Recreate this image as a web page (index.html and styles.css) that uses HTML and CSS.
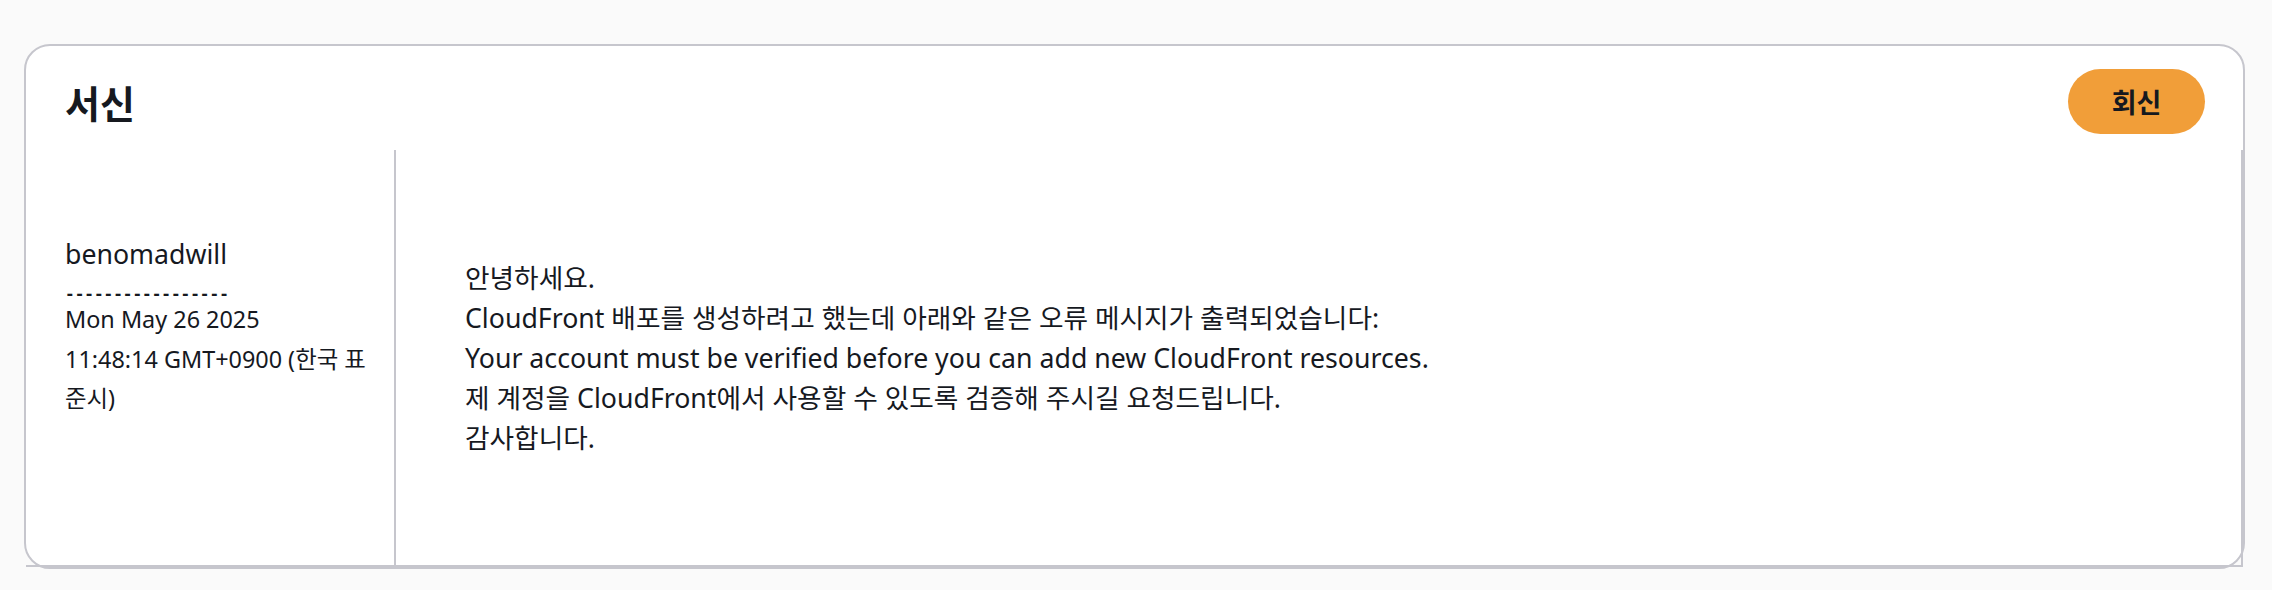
FILE: index.html
```html
<!DOCTYPE html>
<html lang="ko">
<head>
<meta charset="utf-8">
<title>서신</title>
<link rel="stylesheet" href="styles.css">
</head>
<body>
  <section class="card">
    <header class="card-header">
      <h2 class="card-title">서신</h2>
      <button class="reply-btn" type="button">회신</button>
    </header>
    <div class="message">
      <div class="meta">
        <div class="author">benomadwill</div>
        <div class="sep">-----------------</div>
        <div class="date">Mon May 26 2025<br>11:48:14 GMT+0900 (한국 표준시)</div>
      </div>
      <div class="content">
        <p class="body-text">안녕하세요.<br>CloudFront 배포를 생성하려고 했는데 아래와 같은 오류 메시지가 출력되었습니다:<br>Your account must be verified before you can add new CloudFront resources.<br>제 계정을 CloudFront에서 사용할 수 있도록 검증해 주시길 요청드립니다.<br>감사합니다.</p>
      </div>
    </div>
  </section>
</body>
</html>
```
FILE: styles.css
```css
html, body {
  margin: 0;
  padding: 0;
}

body {
  background: #fafafa;
  padding: 44px 27px 0 24px;
  font-family: "Noto Sans", "Noto Sans CJK KR", sans-serif;
  color: #16191f;
}

.card {
  background: #ffffff;
  border: 2px solid #c6c6cd;
  border-radius: 26px;
}

.card-header {
  display: flex;
  justify-content: space-between;
  align-items: center;
  padding: 23px 38px 16px 39px;
}

.card-title {
  margin: 0;
  font-family: "Noto Sans CJK KR", sans-serif;
  font-size: 38px;
  font-weight: 700;
  line-height: 46px;
  color: #16191f;
}

.reply-btn {
  width: 137px;
  height: 65px;
  border: none;
  border-radius: 33px;
  background: #f19e39;
  font-family: "Noto Sans CJK KR", sans-serif;
  font-size: 27px;
  font-weight: 700;
  color: #16191f;
  padding: 0;
  cursor: pointer;
}

.message {
  display: grid;
  grid-template-columns: 370px 1fr;
  height: 417px;
  box-sizing: border-box;
  border-right: 2px solid #c6c6cd;
  border-bottom: 2px solid #c6c6cd;
}

.meta {
  border-right: 2px solid #c6c6cd;
  padding: 83.7px 19px 0 39px;
}

.author {
  font-size: 26.7px;
  line-height: 40px;
}

.sep {
  height: 26.5px;
  box-sizing: border-box;
  padding-top: 11px;
  font-family: "DejaVu Sans Mono", monospace;
  font-size: 16px;
  font-weight: 700;
  line-height: 18.6px;
  white-space: nowrap;
}

.date {
  font-size: 23.4px;
  line-height: 39.5px;
}

.content {
  display: flex;
  align-items: center;
  padding: 0 40px 0 69px;
}

.body-text {
  margin: 0;
  font-size: 26.7px;
  line-height: 40px;
}
```
